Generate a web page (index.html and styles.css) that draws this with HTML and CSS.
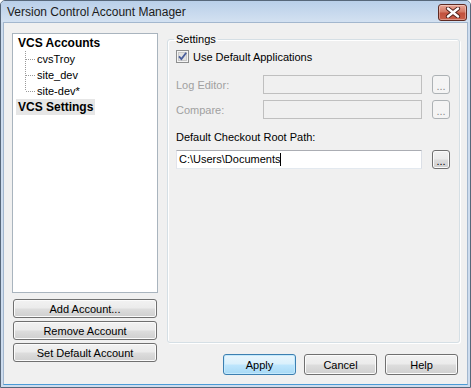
FILE: index.html
```
<!DOCTYPE html>
<html lang="en">
<head>
    <meta charset="UTF-8">
    <title>Version Control Account Manager</title>
    <link rel="stylesheet" href="styles.css">
</head>
<body>
    <div class="window">
        <div class="titlebar">
            <span class="title">Version Control Account Manager</span>
            <button class="close" title="Close">
                <svg width="16" height="11" viewBox="0 0 16 11">
                    <path d="M3 1.5 L13 9.5 M13 1.5 L3 9.5" stroke="#4a1c16" stroke-width="4.2" stroke-linecap="round"/>
                    <path d="M3 1.5 L13 9.5 M13 1.5 L3 9.5" stroke="#fff" stroke-width="2.4" stroke-linecap="round"/>
                </svg>
            </button>
        </div>

        <div class="client">
            <div class="left">
                <div class="tree">
                    <div class="node">VCS Accounts</div>
                    <div class="branch">
                        <div class="leaf">cvsTroy</div>
                        <div class="leaf">site_dev</div>
                        <div class="leaf">site-dev*</div>
                    </div>
                    <div class="node selected">VCS Settings</div>
                </div>
                <div class="side-buttons">
                    <button class="btn">Add Account...</button>
                    <button class="btn">Remove Account</button>
                    <button class="btn">Set Default Account</button>
                </div>
            </div>

            <div class="right">
                <fieldset class="group">
                    <legend>Settings</legend>
                    <label class="check">
                        <span class="box">
                            <svg width="13" height="13" viewBox="0 0 13 13">
                                <rect x="0.5" y="0.5" width="12" height="12" fill="#f4f4f4" stroke="#8e8f8f"/>
                                <rect x="2.5" y="2.5" width="8" height="8" fill="#e2e2e2" stroke="#c9c9c9"/>
                                <path d="M3 6.3 L5.4 9 L10.2 2.8" fill="none" stroke="#4a5f9c" stroke-width="1.8"/>
                            </svg>
                        </span>
                        Use Default Applications
                    </label>

                    <div class="row first disabled">
                        <span class="row-label">Log Editor:</span>
                        <div class="field"></div>
                        <button class="btn browse" disabled>...</button>
                    </div>
                    <div class="row disabled">
                        <span class="row-label">Compare:</span>
                        <div class="field"></div>
                        <button class="btn browse" disabled>...</button>
                    </div>

                    <div class="path-label">Default Checkout Root Path:</div>
                    <div class="row">
                        <div class="field path">C:\Users\Documents<span class="caret"></span></div>
                        <button class="btn browse">...</button>
                    </div>
                </fieldset>

                <div class="dialog-buttons">
                    <button class="btn default">Apply</button>
                    <button class="btn">Cancel</button>
                    <button class="btn">Help</button>
                </div>
            </div>
        </div>
    </div>
</body>
</html>
```

FILE: styles.css
```
* { box-sizing: border-box; }
body { margin: 0; font-family: "Liberation Sans", Arial, sans-serif; font-size: 11px; color: #000; }

.window {
    width: 471px;
    height: 388px;
    border: 1px solid #57677a;
    border-radius: 5px 5px 0 0;
    background: #cddcee;
    padding: 0 2px 2px 2px;
    display: flex;
    flex-direction: column;
}

.titlebar {
    height: 21px;
    margin: 0 -2px;
    padding: 0 3px 0 6px;
    display: flex;
    align-items: center;
    justify-content: space-between;
    background: linear-gradient(#b9cfe9, #d3e1f1);
    border-radius: 4px 4px 0 0;
}
.title { font-size: 12px; color: #1b1b1b; padding-top: 1px; }
.close {
    width: 29px;
    height: 17px;
    margin-top: 2px;
    padding: 0;
    border: 1px solid #5e2a22;
    border-radius: 3px;
    background: linear-gradient(#e9a697, #d47a66 45%, #c2513d 55%, #c9604a);
    box-shadow: inset 0 0 0 1px rgba(255,255,255,0.35);
    display: flex;
    align-items: center;
    justify-content: center;
}

.client {
    flex: 1;
    background: #f0f0f0;
    border: 1px solid #a3b7ce;
    border-bottom-color: #4a9ad6;
    padding: 10px 7px 0 8px;
    display: flex;
    gap: 9px;
}

.left { width: 146px; display: flex; flex-direction: column; }
.tree {
    height: 260px;
    background: #fff;
    border: 1px solid #a9b4be;
    padding-top: 1px;
}
.node {
    width: fit-content;
    height: 16px;
    line-height: 16px;
    margin-left: 3px;
    padding: 0 2px;
    font-size: 12px;
    font-weight: bold;
}
.node.selected { background: #e6e6e6; }
.branch {
    background-image: repeating-linear-gradient(to bottom, #9a9a9a 0 1px, transparent 1px 2px);
    background-size: 1px calc(100% - 8px);
    background-position: 12px 0;
    background-repeat: no-repeat;
}
.leaf {
    height: 16px;
    line-height: 16px;
    padding-left: 24px;
    background-image: repeating-linear-gradient(to right, #9a9a9a 0 1px, transparent 1px 2px);
    background-size: 9px 1px;
    background-position: 13px 8px;
    background-repeat: no-repeat;
}

.side-buttons { display: flex; flex-direction: column; gap: 3px; margin-top: 6px; padding: 0 1px; }
.side-buttons .btn { height: 19px; }

.btn {
    font-family: "Liberation Sans", Arial, sans-serif;
    font-size: 11px;
    color: #000;
    padding: 0;
    border: 1px solid #707070;
    border-radius: 3px;
    background: linear-gradient(#f2f2f2, #ebebeb 48%, #dddddd 52%, #cfcfcf);
    box-shadow: inset 0 0 0 1px #fbfbfb;
}
.btn.default {
    border-color: #3c7fb1;
    background: linear-gradient(#eaf6fd, #d9f0fc 48%, #bee6fd 52%, #a7d9f5);
    box-shadow: inset 0 0 0 1px #c4e9fc;
}
.btn:disabled {
    color: #8b8b8b;
    border-color: #adb2b5;
    background: #f4f4f4;
    box-shadow: none;
}

.right { flex: 1; display: flex; flex-direction: column; }
.group {
    margin: 0;
    height: 310px;
    padding: 0 8px;
    border: 1px solid #d5dfe5;
    border-radius: 3px;
    box-shadow: inset 1px 1px 0 #fff, 1px 1px 0 #fff;
}
.group legend { padding: 0 2px; margin-left: -2px; line-height: 13px; }

.check { display: flex; align-items: center; gap: 4px; margin-top: 4px; height: 13px; }
.box { display: flex; }

.row { display: flex; align-items: center; height: 19px; margin-top: 6px; }
.row.first { margin-top: 12px; }
.row-label { width: 87px; }
.disabled .row-label { color: #a0a0a0; }
.field {
    width: 159px;
    height: 19px;
    border: 1px solid #abadb3;
    border-color: #abadb3 #dbdfe6 #e3e9ef #e2e3ea;
    background: #fff;
}
.disabled .field { background: #f0f0f0; border-color: #bfbfbf; }
.field.path { width: 246px; padding: 2px 0 0 2px; line-height: 13px; }
.caret { display: inline-block; width: 1px; height: 13px; background: #000; vertical-align: top; }
.browse { width: 18px; height: 19px; margin-left: 10px; line-height: 10px; padding-top: 3px; }

.path-label { margin-top: 12px; line-height: 13px; }

.dialog-buttons { display: flex; justify-content: flex-end; gap: 8px; margin-top: 11px; padding-right: 2px; }
.dialog-buttons .btn { width: 73px; height: 21px; }
```
